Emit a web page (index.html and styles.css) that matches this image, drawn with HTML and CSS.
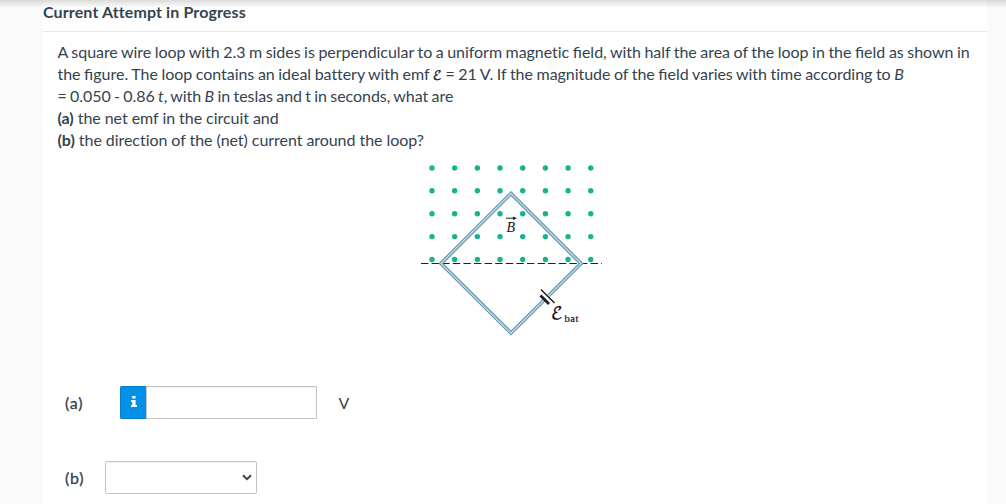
FILE: index.html
```html
<!DOCTYPE html>
<html lang="en">
<head>
    <meta charset="UTF-8">
    <meta name="viewport" content="width=device-width, initial-scale=1.0">
    <title>Current Attempt in Progress</title>
    <link rel="stylesheet" href="styles.css">
</head>
<body>
    <main class="attempt">
        <h2 class="attempt-title">Current Attempt in Progress</h2>

        <div class="question">
            <p class="question-text">
                <span class="line-1">A square wire loop with 2.3 m sides is perpendicular to a uniform magnetic <span class="fi">field</span>, with half the area of the loop in the <span class="fi">field</span> as shown in</span><br>
                <span class="line-2">the <span class="fi">figure</span>. The loop contains an ideal battery with emf <span class="emf">ℰ</span> = 21 V. If the magnitude of the <span class="fi">field</span> varies with time according to <i>B</i></span><br>
                <span class="line-3">= 0.050 - 0.86 <i>t</i>, with <i>B</i> in teslas and t in seconds, what are</span><br>
                <b>(a)</b> the net emf in the circuit and<br>
                <b>(b)</b> the direction of the (net) current around the loop?
            </p>

            <svg class="figure" width="184" height="176" viewBox="420 162 184 176">
                <!-- magnetic field, pointing out of the page -->
                <g class="field">
                    <path d="M432 168H592"/>
                    <path d="M432 190.8H592"/>
                    <path d="M432 213.7H592"/>
                    <path d="M432 236.6H592"/>
                    <path d="M432 259.5H592"/>
                </g>
                <path class="boundary" d="M421 263.5H602"/>
                <!-- wire loop -->
                <path class="wire-edge" d="M511 193.5L581 263.5L511 333L441 263.5Z"/>
                <path class="wire" d="M511 193.5L581 263.5L511 333L441 263.5Z"/>
                <!-- battery -->
                <path class="battery-gap" d="M544.5 299.5L548.5 295.5"/>
                <path class="plate-long" d="M541 289.5L554.5 303"/>
                <path class="plate-short" d="M540.5 295.5L549 304"/>
                <path class="arrow" d="M506 218.2H515"/>
                <path class="arrow-head" d="M513 216.4L517 218.2L513 220Z"/>
                <text class="label-b" x="506.5" y="231.5">B</text>
                <text class="label-e" x="551" y="319">ℰ</text>
                <text class="label-bat" x="564.5" y="322" textLength="14">bat</text>
            </svg>
        </div>

        <div class="answer answer-a">
            <span class="part">(a)</span>
            <div class="input-group">
                <button class="info" type="button" aria-label="Info">
                    <svg width="6" height="12" viewBox="0 0 6 12">
                        <path fill="#fff" d="M1.2 0H4.6V2.6H1.2ZM0 4H4.6V9H6V11H0V9H1.3V6H0Z"/>
                    </svg>
                </button>
                <input class="number" type="text">
            </div>
            <span class="unit">V</span>
        </div>

        <div class="answer answer-b">
            <span class="part">(b)</span>
            <div class="select">
                <svg width="10" height="7" viewBox="0 0 10 7">
                    <path class="chevron" d="M1 1.2L5 5.2L9 1.2"/>
                </svg>
            </div>
        </div>
    </main>
</body>
</html>
```

FILE: styles.css
```css
* {
    box-sizing: border-box;
}
body {
    font-family: Lato, sans-serif;
    font-size: 16px;
    line-height: 22px;
    color: #34434f;
    background: linear-gradient(rgba(0, 0, 0, 0.14), rgba(0, 0, 0, 0) 8px) no-repeat, linear-gradient(to right, #fafafa 43px, #fff 43px, #fff 987px, #fafafa 987px);
    margin: 0;
    height: 504px;
    overflow: hidden;
}
.attempt {
    width: 944px;
    margin-left: 43px;
}
.attempt-title {
    height: 32px;
    margin: 0;
    padding-top: 1px;
    font-size: 16px;
    line-height: 22px;
    font-weight: bold;
    letter-spacing: 0.12px;
    border-bottom: 1px solid #e8e8e8;
}
.question {
    height: 354px;
    padding: 9px 14.5px 0;
}
.question-text {
    margin: 0;
    white-space: nowrap;
    letter-spacing: -0.05px;
}
.line-1 {
    word-spacing: -0.45px;
}
.line-2 {
    word-spacing: -0.4px;
}
.line-3 {
    word-spacing: -0.7px;
}
.fi {
    letter-spacing: 0;
}
.emf {
    font-family: "DejaVu Math TeX Gyre", "DejaVu Serif", serif;
    font-size: 13px;
    line-height: 1;
    color: #111;
    -webkit-text-stroke: 0.3px #111;
}
.figure {
    display: block;
    margin: 11px 0 0 362.5px;
}
.field path {
    fill: none;
    stroke: #16b48a;
    stroke-width: 5.4;
    stroke-linecap: round;
    stroke-dasharray: 0 22.68;
}
.boundary {
    stroke: #231f20;
    stroke-width: 1.2;
    stroke-dasharray: 7.4 3.2;
}
.wire-edge {
    fill: none;
    stroke: #5f8fa8;
    stroke-width: 3.6;
}
.wire {
    fill: none;
    stroke: #b9d6e4;
    stroke-width: 1.6;
}
.battery-gap {
    stroke: #fff;
    stroke-width: 5;
}
.plate-long {
    stroke: #231f20;
    stroke-width: 1.5;
}
.plate-short {
    stroke: #231f20;
    stroke-width: 2.8;
}
.arrow {
    stroke: #231f20;
    stroke-width: 1;
}
.arrow-head {
    fill: #231f20;
}
.label-b {
    font: italic 14px "Liberation Serif", serif;
    fill: #111;
}
.label-e {
    font: 17px "DejaVu Math TeX Gyre", "DejaVu Serif", serif;
    fill: #111;
    stroke: #111;
    stroke-width: 0.3;
}
.label-bat {
    font: 10.5px "Liberation Serif", serif;
    fill: #111;
    stroke: #111;
    stroke-width: 0.2;
}
.answer {
    display: flex;
    align-items: center;
    height: 33px;
    padding-left: 22px;
}
.answer-b {
    margin-top: 42px;
}
.part {
    letter-spacing: 0.8px;
    -webkit-text-stroke: 0.3px #34434f;
}
.answer-a .part {
    width: 55px;
}
.answer-b .part {
    width: 40px;
}
.input-group {
    display: flex;
    width: 197px;
    height: 33px;
}
.info {
    display: flex;
    align-items: center;
    justify-content: center;
    width: 26px;
    padding: 0 0 2px 1px;
    background-color: #0490e6;
    border: 1px solid #0680cb;
    border-right: none;
    border-radius: 2px 0 0 2px;
}
.number {
    flex: 1;
    min-width: 0;
    border: 1px solid #c4c4c4;
    background-color: #fff;
    box-shadow: inset 0 1px 1px rgba(0, 0, 0, 0.06);
}
.unit {
    margin-left: 21.5px;
}
.select {
    display: flex;
    align-items: center;
    justify-content: flex-end;
    width: 152px;
    height: 33px;
    padding-right: 4px;
    border: 1px solid #c4c4c4;
    border-radius: 2px;
    box-shadow: inset 0 1px 1px rgba(0, 0, 0, 0.06);
}
.chevron {
    fill: none;
    stroke: #444;
    stroke-width: 2;
}
```
